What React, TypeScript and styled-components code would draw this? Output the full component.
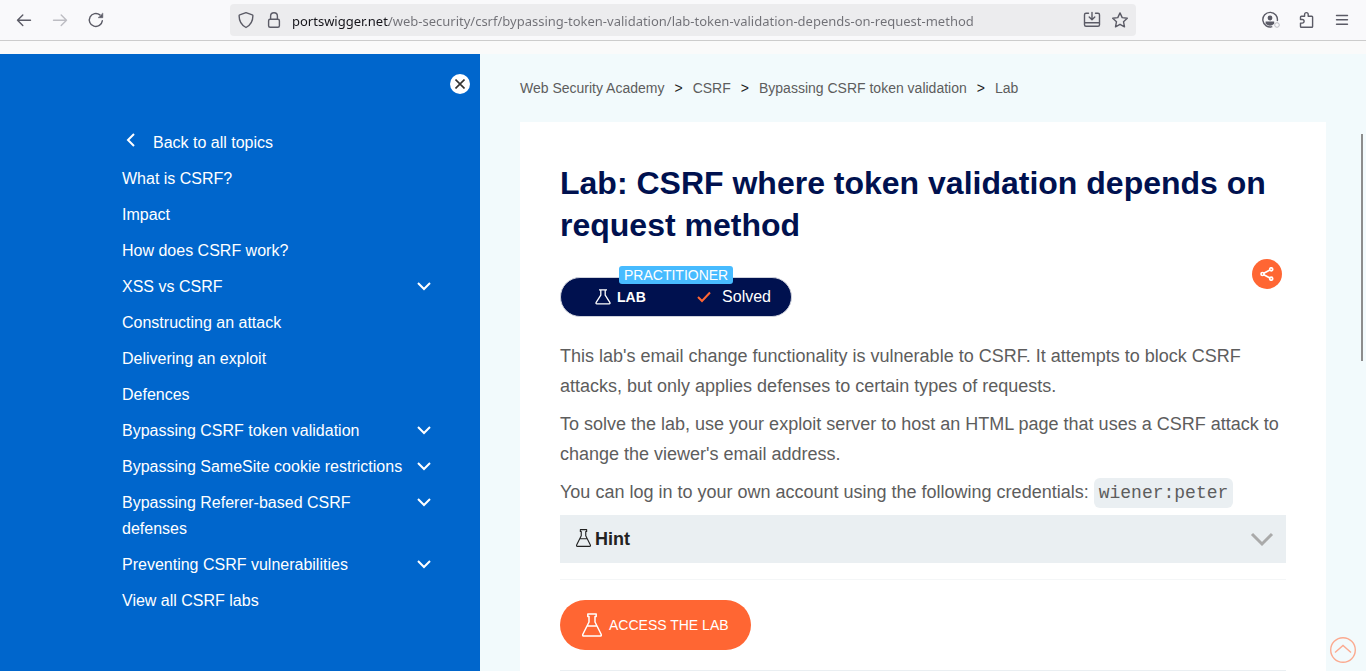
import React from "react";
import styled, { createGlobalStyle } from "styled-components";

const GlobalStyle = createGlobalStyle`
  *, *::before, *::after { box-sizing: border-box; }
  body { margin: 0; overflow: hidden; background: #fafafa; font-family: "Liberation Sans", Arial, sans-serif; }
  button { font: inherit; border: 0; padding: 0; background: none; color: inherit; cursor: pointer; }
  a { color: inherit; text-decoration: none; }
  svg { display: block; flex: none; }
`;

const Window = styled.div`
  display: flex;
  flex-direction: column;
  height: 100vh;
  overflow: hidden;
`;

const Toolbar = styled.header`
  display: flex;
  align-items: center;
  flex: none;
  height: 41px;
  padding: 0 14px;
  background: #f9f9fb;
  border-bottom: 1px solid #cccccc;
`;

const ToolGroup = styled.div<{ $end?: boolean }>`
  display: flex;
  flex: 1;
  gap: 16px;
  justify-content: ${(p) => (p.$end ? "flex-end" : "flex-start")};
`;

const ToolButton = styled.button`
  display: flex;
  align-items: center;
  justify-content: center;
  width: 20px;
  height: 20px;
  color: #5b5b66;
  &:disabled { color: #bdbdc3; }
`;

const AddressBar = styled.form`
  display: flex;
  align-items: center;
  gap: 8px;
  width: 906px;
  height: 32px;
  padding: 0 6px;
  border-radius: 4px;
  background: #ececee;
`;

const AddressInput = styled.input`
  flex: 1;
  min-width: 0;
  height: 26px;
  padding: 2px 0 0;
  border: 0;
  outline: 0;
  font: 13px/24px "Noto Sans", "Open Sans", sans-serif;
  color: transparent;
  background: linear-gradient(90deg, #15141a 97px, #707076 97px);
  background-clip: text;
  -webkit-background-clip: text;
`;

const Page = styled.div`
  position: relative;
  display: flex;
  flex: 1;
  min-height: 0;
  margin-top: 13px;
  background: #f2fafc;
`;

const Sidebar = styled.aside`
  flex: none;
  width: 480px;
  padding: 20px 10px 0 122px;
  background: #0066cc;
  color: #ffffff;
`;

const CloseButton = styled.button`
  display: flex;
  align-items: center;
  justify-content: center;
  width: 20px;
  height: 20px;
  margin: 0 0 30px auto;
  border-radius: 50%;
  background: #ffffff;
  color: #333332;
`;

const TopicList = styled.ul`
  width: 310px;
  margin: 0;
  padding: 0;
  list-style: none;
`;

const Topic = styled.li`
  display: flex;
  justify-content: space-between;
  padding: 6px 0 4px;
  font-size: 16px;
  line-height: 26px;
`;

const TopicLink = styled.a<{ $back?: boolean }>`
  display: flex;
  gap: 16px;
  max-width: 284px;
  padding-left: ${(p) => (p.$back ? "3px" : "0")};
`;

const Expand = styled.button`
  display: flex;
  align-items: center;
  justify-content: center;
  width: 16px;
  height: 24px;
`;

const BackMark = styled.span`
  display: flex;
  padding-top: 3px;
`;

const Main = styled.main`
  flex: 1;
  min-width: 0;
  padding: 0 40px;
`;

const Breadcrumbs = styled.nav`
  display: flex;
  align-items: center;
  gap: 10px;
  height: 68px;
  font-size: 14px;
  line-height: 20px;
  color: #5d5d5d;
`;

const Separator = styled.span`
  color: #222222;
`;

const Card = styled.article`
  padding: 40px;
  background: #ffffff;
`;

const Title = styled.h1`
  margin: 0;
  font-size: 32px;
  line-height: 42px;
  color: #00114f;
`;

const StatusRow = styled.div`
  display: flex;
  align-items: flex-start;
  justify-content: space-between;
  height: 95px;
  padding: 13px 4px 0 0;
`;

const LabStatus = styled.div`
  position: relative;
  display: flex;
  align-items: center;
  justify-content: space-between;
  width: 232px;
  height: 40px;
  margin-top: 18px;
  padding: 0 20px 0 34px;
  border: 1px solid #cfd2dc;
  border-radius: 20px;
  background: #00114f;
  color: #ffffff;
`;

const Level = styled.span`
  position: absolute;
  top: -12px;
  left: 58px;
  padding: 0 5px;
  border-radius: 3px;
  background: #47bbff;
  font-size: 14px;
  line-height: 18px;
`;

const StatusPart = styled.span<{ $bold?: boolean }>`
  display: flex;
  align-items: center;
  gap: ${(p) => (p.$bold ? "6px" : "11px")};
  font-size: ${(p) => (p.$bold ? "14px" : "16px")};
  font-weight: ${(p) => (p.$bold ? "bold" : "normal")};
`;

const ShareButton = styled.button`
  display: flex;
  align-items: center;
  justify-content: center;
  width: 30px;
  height: 30px;
  border-radius: 50%;
  background: #ff6633;
  color: #ffffff;
`;

const Paragraph = styled.p`
  margin: 0 0 8px;
  font-size: 18px;
  line-height: 30px;
  color: #5d5d5d;
`;

const Code = styled.code`
  display: inline-block;
  margin: 1px 0 -1px;
  padding: 0 5px;
  border-radius: 6px;
  background: #eaeff2;
  font-family: "Liberation Mono", monospace;
  font-size: 18px;
  line-height: 30px;
  vertical-align: top;
`;

const Hint = styled.button`
  display: flex;
  align-items: center;
  width: 100%;
  height: 48px;
  padding: 0 12px 0 16px;
  background: #eaeff2;
  font-size: 18px;
  font-weight: bold;
  color: #222222;
`;

const HintLabel = styled.span`
  display: flex;
  flex: 1;
  align-items: flex-start;
  gap: 4px;
`;

const Rule = styled.hr<{ $strong?: boolean }>`
  height: 1px;
  margin: ${(p) => (p.$strong ? "20px 0" : "16px 0 20px")};
  border: 0;
  background: ${(p) => (p.$strong ? "#eaeff2" : "#f4f6f7")};
`;

const AccessLink = styled.a`
  display: flex;
  align-items: center;
  gap: 7px;
  width: 191px;
  height: 50px;
  padding-left: 22px;
  border-radius: 25px;
  background: #ff6633;
  font-size: 14px;
  color: #ffffff;
`;

const ScrollThumb = styled.div`
  position: absolute;
  top: 80px;
  right: 3px;
  width: 2px;
  height: 227px;
  background: #8c8c8c;
`;

const TopLink = styled.a`
  position: absolute;
  right: 10px;
  bottom: 8px;
`;

const Flask = () => (
  <svg width="16" height="16" viewBox="0 0 16 16" fill="none" stroke="currentColor" strokeWidth="1.300" strokeLinejoin="round">
    <path d="M4 .8h8M5.800 1v5.200L1.200 13.400q-.7 1.400.7 1.400h12.200q1.400 0 .7-1.400L10.200 6.200V1" />
  </svg>
);

const TallFlask = ({ w, h, width }: { w: number; h: number; width: number }) => (
  <svg width={w} height={h} viewBox="0 0 20 24" fill="none" stroke="currentColor" strokeWidth={width} strokeLinejoin="round">
    <path d="M5.800.9h8.400v2.500h-1.200v5.600l6 12q.9 2.100-1 2.100H2q-1.900 0-1-2.100L7 9V3.400H5.800zM5.200 13h9.600" />
  </svg>
);

const Chevron = () => (
  <svg width="16" height="12" viewBox="0 0 16 12" fill="none" stroke="currentColor" strokeWidth="2">
    <path d="M2 3l6 6 6-6" />
  </svg>
);

const topics: { label: string; nested?: boolean }[] = [
  { label: "What is CSRF?" },
  { label: "Impact" },
  { label: "How does CSRF work?" },
  { label: "XSS vs CSRF", nested: true },
  { label: "Constructing an attack" },
  { label: "Delivering an exploit" },
  { label: "Defences" },
  { label: "Bypassing CSRF token validation", nested: true },
  { label: "Bypassing SameSite cookie restrictions", nested: true },
  { label: "Bypassing Referer-based CSRF defenses", nested: true },
  { label: "Preventing CSRF vulnerabilities", nested: true },
  { label: "View all CSRF labs" },
];

const crumbs = ["Web Security Academy", "CSRF", "Bypassing CSRF token validation", "Lab"];

const line = { fill: "none", stroke: "currentColor", strokeWidth: 1.4, strokeLinecap: "round", strokeLinejoin: "round" } as const;

const BrowserToolbar = () => (
  <Toolbar>
    <ToolGroup>
      <ToolButton aria-label="Back">
        <svg width="20" height="20" viewBox="0 0 20 20" {...line}><path d="M16.500 10.200h-13M8.800 4.900L3.500 10.200l5.300 5.300" /></svg>
      </ToolButton>
      <ToolButton aria-label="Forward" disabled>
        <svg width="20" height="20" viewBox="0 0 20 20" {...line}><path d="M3.500 10.200h13M11.200 4.900l5.300 5.300-5.300 5.300" /></svg>
      </ToolButton>
      <ToolButton aria-label="Reload">
        <svg width="20" height="20" viewBox="0 0 20 20" {...line}>
          <path d="M16.300 10.800A6.500 6.500 0 1 1 13.900 4.900" />
          <path d="M16.800 3.400v4.300h-4.300z" fill="currentColor" strokeWidth="0.6" />
        </svg>
      </ToolButton>
    </ToolGroup>
    <AddressBar>
      <ToolButton type="button" aria-label="Tracking protection">
        <svg width="20" height="20" viewBox="0 0 20 20" {...line}><path d="M10 2.600l6.300 2.200q.6.200.6.900c0 5-1.700 9-6.900 11.800C4.800 14.700 3.100 10.700 3.100 5.700q0-.7.6-.9z" /></svg>
      </ToolButton>
      <ToolButton type="button" aria-label="Connection secure">
        <svg width="20" height="20" viewBox="0 0 20 20" {...line}><rect x="4.600" y="9.300" width="10.800" height="8" rx="1.500" /><path d="M6.600 9.300V6.200a3.400 3.400 0 0 1 6.800 0v3.100" /></svg>
      </ToolButton>
      <AddressInput
        aria-label="Address"
        spellCheck={false}
        defaultValue="portswigger.net/web-security/csrf/bypassing-token-validation/lab-token-validation-depends-on-request-method"
      />
      <ToolButton type="button" aria-label="Save page">
        <svg width="20" height="20" viewBox="0 0 20 20" {...line}><path d="M6.500 3.200H4q-1.500 0-1.500 1.500v10.100q0 1.500 1.500 1.500h12q1.500 0 1.500-1.500V4.700q0-1.500-1.500-1.500h-2.500M2.500 12.800h15M10 2.500v7M7.200 7l2.800 2.800L12.800 7" /></svg>
      </ToolButton>
      <ToolButton type="button" aria-label="Bookmark">
        <svg width="20" height="20" viewBox="0 0 20 20" {...line}><path d="M10 2.900l2.200 4.700 5.100.6-3.800 3.500 1 5.100L10 14.300l-4.500 2.500 1-5.100-3.800-3.500 5.100-.6z" /></svg>
      </ToolButton>
    </AddressBar>
    <ToolGroup $end>
      <ToolButton aria-label="Account">
        <svg width="20" height="20" viewBox="0 0 20 20" fill="none" stroke="currentColor" strokeWidth="1.400">
          <path d="M12.300 16.600A7.300 7.300 0 1 1 17.300 11" />
          <circle cx="10" cy="8" r="2.400" fill="currentColor" stroke="none" />
          <path d="M5.600 11.600h8.600v2.200q-4.200 4-8.600 0z" fill="currentColor" stroke="none" />
          <circle cx="17" cy="15" r="2.300" stroke="#bdbdc3" strokeWidth="1" />
        </svg>
      </ToolButton>
      <ToolButton aria-label="Extensions">
        <svg width="20" height="20" viewBox="0 0 20 20" {...line}><path d="M5.300 17.300q-.8 0-.8-.8v-3.400h1.800a1.800 1.800 0 0 0 0-3.600H4.500V7q0-.8.800-.8h3.300V4.400a1.800 1.800 0 0 1 3.600 0v1.800h3.600q.8 0 .8.800v9.500q0 .8-.8.8z" /></svg>
      </ToolButton>
      <ToolButton aria-label="Menu">
        <svg width="20" height="20" viewBox="0 0 20 20" {...line}><path d="M4.500 5.500h11M4.500 9.800h11M4.500 14.200h11" /></svg>
      </ToolButton>
    </ToolGroup>
  </Toolbar>
);

const TopicNav = () => (
  <Sidebar>
    <CloseButton aria-label="Close topics">
      <svg width="10" height="10" viewBox="0 0 10 10" fill="none" stroke="currentColor" strokeWidth="1.600"><path d="M.5.500l9 9M9.500.500l-9 9" /></svg>
    </CloseButton>
    <nav aria-label="Topics">
      <TopicList>
        <Topic>
          <TopicLink href="#topics" $back>
            <BackMark>
              <svg width="12" height="14" viewBox="0 0 12 14" fill="none" stroke="currentColor" strokeWidth="2"><path d="M9 1L3 7l6 6" /></svg>
            </BackMark>
            Back to all topics
          </TopicLink>
        </Topic>
        {topics.map((t) => (
          <Topic key={t.label}>
            <TopicLink href="#topic">{t.label}</TopicLink>
            {t.nested && <Expand aria-label={`Expand ${t.label}`}><Chevron /></Expand>}
          </Topic>
        ))}
      </TopicList>
    </nav>
  </Sidebar>
);

export default function App() {
  return (
    <Window>
      <GlobalStyle />
      <BrowserToolbar />
      <Page>
        <TopicNav />
        <Main>
          <Breadcrumbs aria-label="Breadcrumb">
            {crumbs.map((c, i) => (
              <React.Fragment key={c}>
                {i > 0 && <Separator>&gt;</Separator>}
                <a href="#crumb">{c}</a>
              </React.Fragment>
            ))}
          </Breadcrumbs>
          <Card>
            <Title>Lab: CSRF where token validation depends on request method</Title>
            <StatusRow>
              <LabStatus>
                <Level>PRACTITIONER</Level>
                <StatusPart $bold><Flask />LAB</StatusPart>
                <StatusPart>
                  <svg width="14" height="12" viewBox="0 0 14 12" fill="none" stroke="#ff6633" strokeWidth="2"><path d="M1 6l4 4 8-8.500" /></svg>
                  Solved
                </StatusPart>
              </LabStatus>
              <ShareButton aria-label="Share">
                <svg width="14" height="14" viewBox="0 0 14 14" fill="none" stroke="currentColor" strokeWidth="1.700">
                  <circle cx="2.500" cy="7" r="1.500" /><circle cx="11.200" cy="2.300" r="1.500" /><circle cx="11.200" cy="11.700" r="1.500" />
                  <path d="M3.800 6.300L9.900 3M3.800 7.700l6.100 3.300" />
                </svg>
              </ShareButton>
            </StatusRow>
            <Paragraph>
              This lab's email change functionality is vulnerable to CSRF. It attempts to block CSRF attacks, but only applies defenses to certain types of requests.
            </Paragraph>
            <Paragraph>
              To solve the lab, use your exploit server to host an HTML page that uses a CSRF attack to change the viewer's email address.
            </Paragraph>
            <Paragraph>
              You can log in to your own account using the following credentials: <Code>wiener:peter</Code>
            </Paragraph>
            <Hint aria-expanded="false">
              <HintLabel><TallFlask w={15} h={18} width={1.5} />Hint</HintLabel>
              <svg width="24" height="16" viewBox="0 0 24 16" fill="none" stroke="#aaaaaa" strokeWidth="3"><path d="M2 3l10 10L22 3" /></svg>
            </Hint>
            <Rule />
            <AccessLink href="#lab"><TallFlask w={20} h={24} width={1.5} />ACCESS THE LAB</AccessLink>
            <Rule $strong />
          </Card>
        </Main>
        <ScrollThumb />
        <TopLink href="#top" aria-label="Back to top">
          <svg width="26" height="26" viewBox="0 0 26 26" fill="none" stroke="#fbaa90" strokeWidth="1.400"><circle cx="13" cy="13" r="12.300" /><path d="M5 15.500l8-7 8 7" /></svg>
        </TopLink>
      </Page>
    </Window>
  );
}
